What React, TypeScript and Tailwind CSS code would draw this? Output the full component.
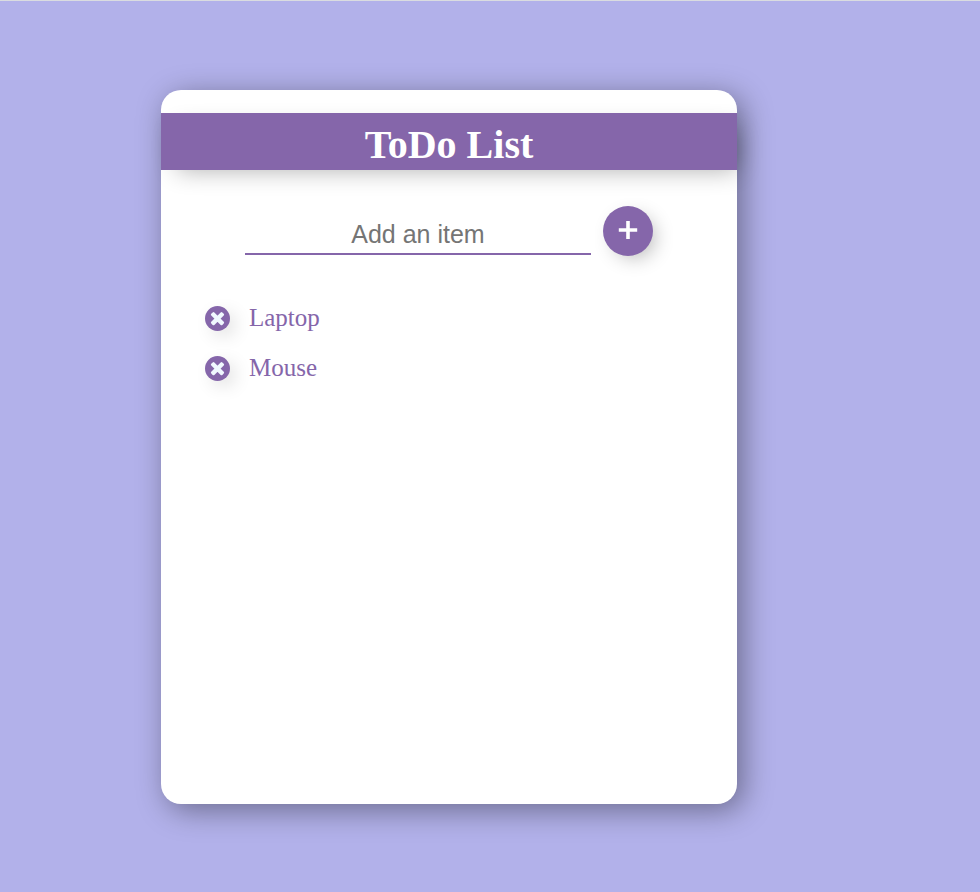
import { useState } from "react";
import type { FormEvent } from "react";

const SERIF = "font-['Liberation_Serif','Times_New_Roman',serif]";
const SANS = "font-['Liberation_Sans',Arial,sans-serif]";

type ItemProps = { text: string; onRemove: () => void };

function TodoItem({ text, onRemove }: ItemProps) {
  return (
    <li className="flex h-[50px] items-center gap-[19px]">
      <button
        type="button"
        aria-label={`Remove ${text}`}
        onClick={onRemove}
        className="flex size-[25px] shrink-0 items-center justify-center rounded-full bg-[#8566aa] text-[#f0f8ff] shadow-[6px_6px_20px_-5px_rgba(0,0,0,0.3)]"
      >
        <svg viewBox="0 0 15 15" className="size-[15px]" fill="currentColor" stroke="currentColor" strokeWidth="2.4" strokeLinejoin="round">
          <path d="M3.5 2.3 7.5 6.3 11.5 2.3 12.9 3.7 8.9 7.7 12.9 11.7 11.5 13.1 7.5 9.1 3.5 13.1 2.1 11.7 6.1 7.7 2.1 3.7Z" />
        </svg>
      </button>
      <span className="text-[25px] leading-[30px] text-[#8566aa]">{text}</span>
    </li>
  );
}

export default function App() {
  const [items, setItems] = useState(["Laptop", "Mouse"]);
  const [draft, setDraft] = useState("");

  const addItem = (event: FormEvent) => {
    event.preventDefault();
    const text = draft.trim();
    if (text) setItems([...items, text]);
    setDraft("");
  };

  return (
    <div className={`flex min-h-screen border-t border-[#dadce0] bg-[#b2b1ea] pt-[89px] pr-[243px] pb-[88px] pl-[161px] ${SERIF}`}>
      <main className="min-w-0 flex-1 rounded-[20px] bg-white pt-[23px] shadow-[6px_6px_30px_0_rgba(0,0,0,0.4)]">
        <h1 className="bg-[#8566aa] pt-[9px] pb-[2px] text-center text-[40px] leading-[46px] font-bold text-white shadow-[8px_8px_25px_-8px_rgba(0,0,0,0.32)]">
          ToDo List
        </h1>
        <form onSubmit={addItem} className="mt-[36px] flex items-start justify-center gap-3">
          <input
            type="text"
            aria-label="Add an item"
            placeholder="Add an item"
            value={draft}
            onChange={(event) => setDraft(event.target.value)}
            className={`mt-[10px] h-[39px] w-3/5 border-b-2 border-[#8566aa] bg-transparent text-center text-[25px] text-[#8566aa] outline-none placeholder:text-[#757575] ${SANS}`}
          />
          <button
            type="submit"
            aria-label="Add"
            className="flex size-[50px] shrink-0 items-center justify-center rounded-full bg-[#8566aa] text-white shadow-[6px_6px_20px_-5px_rgba(0,0,0,0.3)]"
          >
            <svg viewBox="0 0 20 20" className="mb-[2px] size-[20px]" fill="none" stroke="currentColor" strokeWidth="3.6">
              <path d="M10 1v18M.8 10h18.4" />
            </svg>
          </button>
        </form>
        <ul className="mt-[37px] pl-[44px]">
          {items.map((text, index) => (
            <TodoItem
              key={index}
              text={text}
              onRemove={() => setItems(items.filter((_, i) => i !== index))}
            />
          ))}
        </ul>
      </main>
    </div>
  );
}
